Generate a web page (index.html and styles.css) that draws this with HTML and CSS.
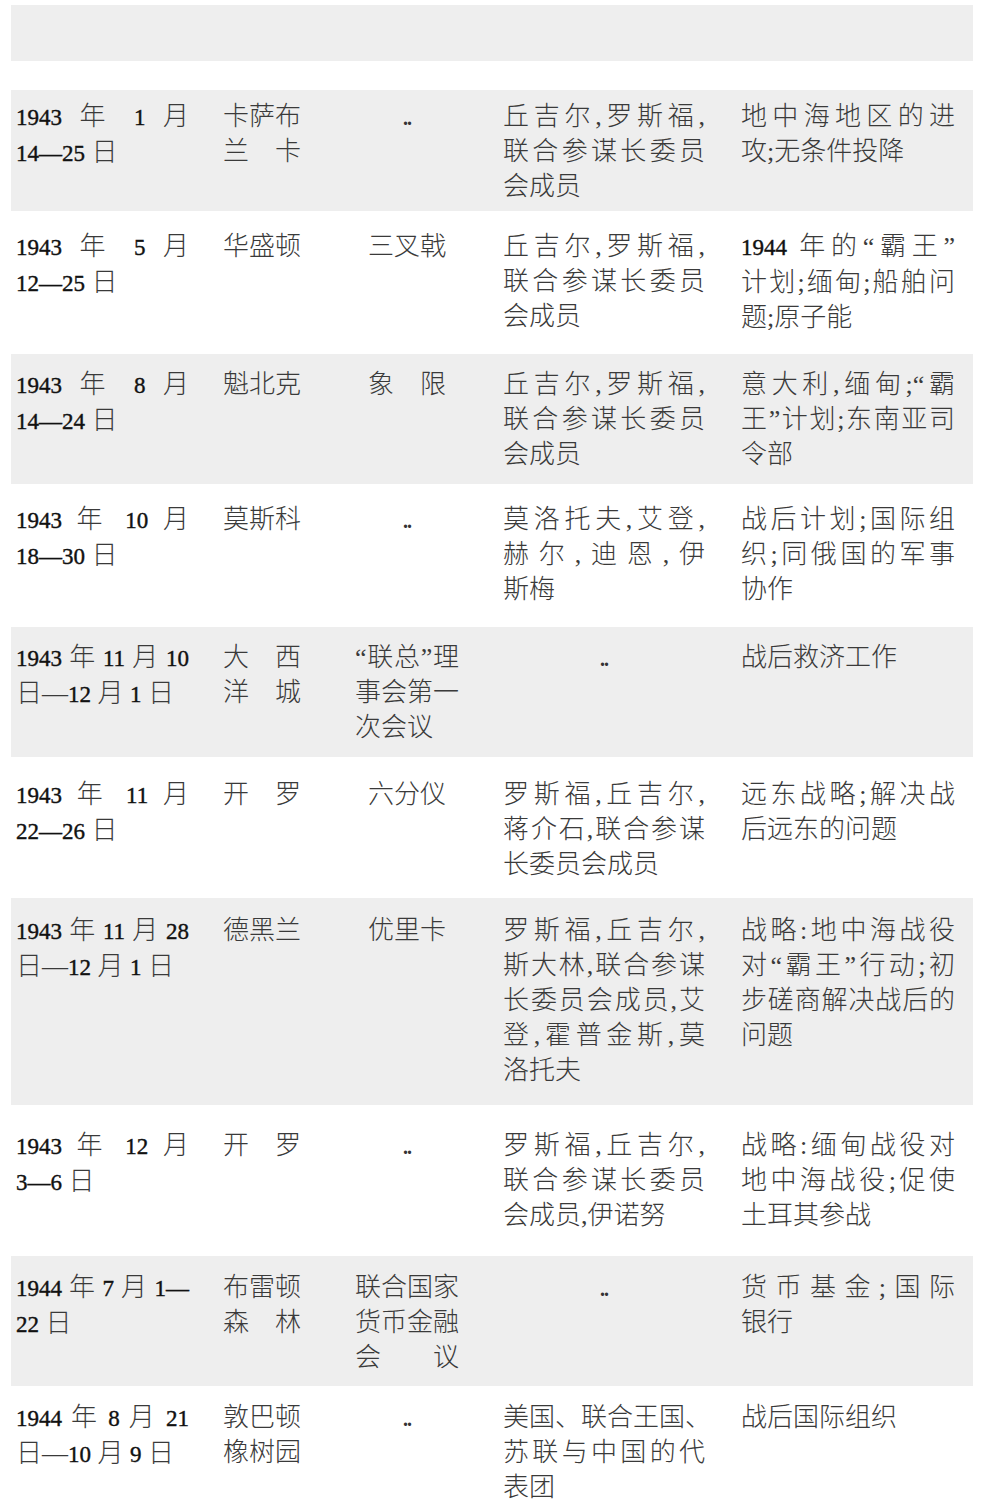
FILE: index.html
```html
<!DOCTYPE html>
<html lang="zh-CN">
<head>
<meta charset="utf-8">
<title>会议表</title>
<link rel="stylesheet" href="styles.css">
</head>
<body>
<div class="table">
  <div class="row head">
    <div class="c c1"></div><div class="c c2"></div><div class="c c3"></div><div class="c c4"></div><div class="c c5"></div>
  </div>

  <div class="row g r1">
    <div class="c c1"><div class="j"><span class="n">1943</span> 年 <span class="n">1</span> 月</div><div><span class="n">14—25</span> 日</div></div>
    <div class="c c2"><div class="j">卡萨布</div><div class="j">兰卡</div></div>
    <div class="c c3 mid"><span class="dots">..</span></div>
    <div class="c c4"><div class="j">丘吉尔,罗斯福,</div><div class="j">联合参谋长委员</div><div>会成员</div></div>
    <div class="c c5"><div class="j">地中海地区的进</div><div>攻;无条件投降</div></div>
  </div>

  <div class="row w r2">
    <div class="c c1"><div class="j"><span class="n">1943</span> 年 <span class="n">5</span> 月</div><div><span class="n">12—25</span> 日</div></div>
    <div class="c c2"><div>华盛顿</div></div>
    <div class="c c3 mid">三叉戟</div>
    <div class="c c4"><div class="j">丘吉尔,罗斯福,</div><div class="j">联合参谋长委员</div><div>会成员</div></div>
    <div class="c c5"><div class="j"><span class="n">1944</span> 年的“霸王”</div><div class="j">计划;缅甸;船舶问</div><div>题;原子能</div></div>
  </div>

  <div class="row g r3">
    <div class="c c1"><div class="j"><span class="n">1943</span> 年 <span class="n">8</span> 月</div><div><span class="n">14—24</span> 日</div></div>
    <div class="c c2"><div>魁北克</div></div>
    <div class="c c3 mid">象　限</div>
    <div class="c c4"><div class="j">丘吉尔,罗斯福,</div><div class="j">联合参谋长委员</div><div>会成员</div></div>
    <div class="c c5"><div class="j">意大利,缅甸;“霸</div><div class="j">王”计划;东南亚司</div><div>令部</div></div>
  </div>

  <div class="row w r4">
    <div class="c c1"><div class="j"><span class="n">1943</span> 年 <span class="n">10</span> 月</div><div><span class="n">18—30</span> 日</div></div>
    <div class="c c2"><div>莫斯科</div></div>
    <div class="c c3 mid"><span class="dots">..</span></div>
    <div class="c c4"><div class="j">莫洛托夫,艾登,</div><div class="j">赫尔,迪恩,伊</div><div>斯梅</div></div>
    <div class="c c5"><div class="j">战后计划;国际组</div><div class="j">织;同俄国的军事</div><div>协作</div></div>
  </div>

  <div class="row g r5">
    <div class="c c1"><div class="j"><span class="n">1943</span> 年 <span class="n">11</span> 月 <span class="n">10</span></div><div>日—<span class="n">12</span> 月 <span class="n">1</span> 日</div></div>
    <div class="c c2"><div class="j">大西</div><div class="j">洋城</div></div>
    <div class="c c3"><div class="j">“联总”理</div><div class="j">事会第一</div><div>次会议</div></div>
    <div class="c c4 mid"><span class="dots">..</span></div>
    <div class="c c5"><div>战后救济工作</div></div>
  </div>

  <div class="row w r6">
    <div class="c c1"><div class="j"><span class="n">1943</span> 年 <span class="n">11</span> 月</div><div><span class="n">22—26</span> 日</div></div>
    <div class="c c2"><div class="j">开罗</div></div>
    <div class="c c3 mid">六分仪</div>
    <div class="c c4"><div class="j">罗斯福,丘吉尔,</div><div class="j">蒋介石,联合参谋</div><div>长委员会成员</div></div>
    <div class="c c5"><div class="j">远东战略;解决战</div><div>后远东的问题</div></div>
  </div>

  <div class="row g r7">
    <div class="c c1"><div class="j"><span class="n">1943</span> 年 <span class="n">11</span> 月 <span class="n">28</span></div><div>日—<span class="n">12</span> 月 <span class="n">1</span> 日</div></div>
    <div class="c c2"><div>德黑兰</div></div>
    <div class="c c3 mid">优里卡</div>
    <div class="c c4"><div class="j">罗斯福,丘吉尔,</div><div class="j">斯大林,联合参谋</div><div class="j">长委员会成员,艾</div><div class="j">登,霍普金斯,莫</div><div>洛托夫</div></div>
    <div class="c c5"><div class="j">战略:地中海战役</div><div class="j">对“霸王”行动;初</div><div class="j">步磋商解决战后的</div><div>问题</div></div>
  </div>

  <div class="row w r8">
    <div class="c c1"><div class="j"><span class="n">1943</span> 年 <span class="n">12</span> 月</div><div><span class="n">3—6</span> 日</div></div>
    <div class="c c2"><div class="j">开罗</div></div>
    <div class="c c3 mid"><span class="dots">..</span></div>
    <div class="c c4"><div class="j">罗斯福,丘吉尔,</div><div class="j">联合参谋长委员</div><div>会成员,伊诺努</div></div>
    <div class="c c5"><div class="j">战略:缅甸战役对</div><div class="j">地中海战役;促使</div><div>土耳其参战</div></div>
  </div>

  <div class="row g r9">
    <div class="c c1"><div class="j"><span class="n">1944</span> 年 <span class="n">7</span> 月 <span class="n">1—</span></div><div><span class="n">22</span> 日</div></div>
    <div class="c c2"><div class="j">布雷顿</div><div class="j">森林</div></div>
    <div class="c c3"><div class="j">联合国家</div><div class="j">货币金融</div><div class="j">会议</div></div>
    <div class="c c4 mid"><span class="dots">..</span></div>
    <div class="c c5"><div class="j">货币基金;国际</div><div>银行</div></div>
  </div>

  <div class="row w r10">
    <div class="c c1"><div class="j"><span class="n">1944</span> 年 <span class="n">8</span> 月 <span class="n">21</span></div><div>日—<span class="n">10</span> 月 <span class="n">9</span> 日</div></div>
    <div class="c c2"><div>敦巴顿</div><div>橡树园</div></div>
    <div class="c c3 mid"><span class="dots">..</span></div>
    <div class="c c4"><div class="j">美国、联合王国、</div><div class="j">苏联与中国的代</div><div>表团</div></div>
    <div class="c c5"><div>战后国际组织</div></div>
  </div>
</div>
</body>
</html>
```

FILE: styles.css
```css
html, body {
  margin: 0;
  padding: 0;
  background: #ffffff;
}

body {
  padding: 5px 9px 0 11px;
  font-family: "Liberation Serif", "Noto Sans CJK SC", serif;
  font-size: 26px;
  line-height: 35px;
  color: #3a3a3a;
  font-weight: 300;
}

.table {
  width: 962px;
}

.row {
  display: grid;
  grid-template-columns: 186px 127px 162px 237px 250px;
  align-items: start;
}

.row.g,
.row.head {
  background: #eeeeee;
}

.row.head {
  height: 56px;
  margin-bottom: 29px;
}

.c {
  box-sizing: border-box;
  word-break: keep-all;
  white-space: nowrap;
}

.c1 { padding: 0 8px 0 5px; }
.c2 { padding: 0 23px 0 26px; }
.c3 { padding: 0 27px 0 31px; }
.c4 { padding: 0 18px 0 17px; }
.c5 { padding: 0 18px 0 18px; }

.mid {
  text-align: center;
}

.j {
  text-align: justify;
  text-align-last: justify;
}

.n {
  font-family: "Liberation Serif", serif;
  font-weight: 400;
  font-size: 23px;
  color: #111111;
  -webkit-text-stroke: 0.4px #111111;
}

.dots {
  font-family: "Liberation Serif", serif;
  font-weight: 700;
  font-size: 20px;
  letter-spacing: -1px;
  color: #333333;
}

.r1 { padding: 9px 0 7px; }
.r2 { padding: 18px 0 19px; }
.r3 { padding: 13px 0 12px; }
.r4 { padding: 18px 0 20px; }
.r5 { padding: 13px 0 12px; }
.r6 { padding: 20px 0 16px; }
.r7 { padding: 15px 0 17px; }
.r8 { padding: 23px 0 23px; }
.r9 { padding: 14px 0 11px; }
.r10 { padding: 14px 0 20px; }
```
